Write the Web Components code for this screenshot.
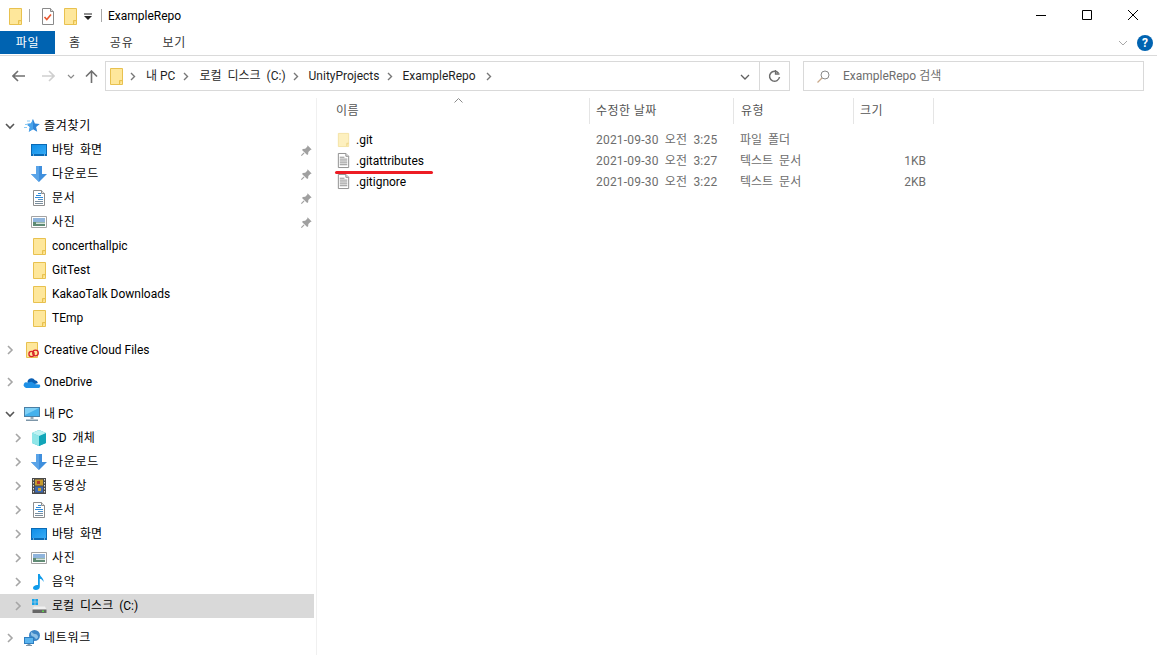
<!DOCTYPE html>
<html lang="ko">
<head>
<meta charset="UTF-8">
<title>ExampleRepo</title>
<style>
  html, body { margin: 0; background: #fff; }
  body { font: 12px/16px Roboto, "Noto Sans CJK KR", sans-serif; color: #000; overflow: hidden; }
  /* 한글은 맑은 고딕보다 좁아서 조금 벌려준다 */
  .ws { word-spacing: 3px; }
  .ls { letter-spacing: .7px; }
</style>
</head>
<body>
<explorer-window>
  <title-bar slot="top"></title-bar>
  <ribbon-tabs slot="top"></ribbon-tabs>
  <address-row slot="top"></address-row>
  <nav-pane slot="side">
    <nav-item class="ls" toggle="open" icon="star" level="0">즐겨찾기</nav-item>
    <nav-item class="ws" level="1" icon="desktop" pin>바탕 화면</nav-item>
    <nav-item class="ls" level="1" icon="down" pin>다운로드</nav-item>
    <nav-item class="ls" level="1" icon="doc" pin>문서</nav-item>
    <nav-item class="ls" level="1" icon="photo" pin>사진</nav-item>
    <nav-item level="1" icon="folder">concerthallpic</nav-item>
    <nav-item level="1" icon="folder">GitTest</nav-item>
    <nav-item level="1" icon="folder">KakaoTalk Downloads</nav-item>
    <nav-item level="1" icon="folder">TEmp</nav-item>
    <nav-item group toggle="closed" icon="ccfolder" level="0">Creative Cloud Files</nav-item>
    <nav-item group toggle="closed" icon="onedrive" level="0">OneDrive</nav-item>
    <nav-item group toggle="open" icon="pc" level="0">내 PC</nav-item>
    <nav-item class="ws" level="1" toggle="closed" icon="cube">3D 개체</nav-item>
    <nav-item class="ls" level="1" toggle="closed" icon="down">다운로드</nav-item>
    <nav-item class="ls" level="1" toggle="closed" icon="film">동영상</nav-item>
    <nav-item class="ls" level="1" toggle="closed" icon="doc">문서</nav-item>
    <nav-item class="ws" level="1" toggle="closed" icon="desktop">바탕 화면</nav-item>
    <nav-item class="ls" level="1" toggle="closed" icon="photo">사진</nav-item>
    <nav-item class="ls" level="1" toggle="closed" icon="music">음악</nav-item>
    <nav-item class="ws" level="1" toggle="closed" icon="disk" selected>로컬 디스크 (C:)</nav-item>
    <nav-item class="ls" group toggle="closed" icon="network" level="0">네트워크</nav-item>
  </nav-pane>
  <file-list slot="main">
    <file-row icon="gitfolder" date="2021-09-30 오전 3:25" type="파일 폴더">.git</file-row>
    <file-row icon="txt" date="2021-09-30 오전 3:27" type="텍스트 문서" size="1KB">.gitattributes</file-row>
    <file-row icon="txt" date="2021-09-30 오전 3:22" type="텍스트 문서" size="2KB">.gitignore</file-row>
  </file-list>
</explorer-window>

<script>
// 16x16 icons, all drawn by hand from the screenshot
const ICONS = {
  folder: `<path d="M2.500.5h12v16h-12z" fill="#fee79b" stroke="#e8c14f"/><path d="M11.500 16v-3.500h3" fill="#f9d878" stroke="#e8c14f"/>`,
  gitfolder: `<path d="M2.500 1.500h11v14h-11z" fill="#fdf0bf" stroke="#f3e2a4"/><path d="M11.500 15v-3h2" fill="#f7e4a3" stroke="#eed68a"/>`,
  check: `<path d="M1.500.5h8l3 3v13h-11z" fill="#fff" stroke="#8a8a8a"/><path d="M9.500.5v3h3" fill="#ddd" stroke="#8a8a8a"/><path d="M3.500 9l2.300 2.500L10 6.500" fill="none" stroke="#e8552d" stroke-width="1.600"/>`,
  txt: `<g transform="translate(1)"><path d="M1.500.5h8l3 3v12h-11z" fill="#fff" stroke="#8c8c8c"/><path d="M9.500.5v3h3" fill="#e4e4e4" stroke="#8c8c8c"/><path d="M3 4.500h5M3 6.500h8M3 8.500h8M3 10.500h8M3 12.500h8" stroke="#8a8a8a"/></g>`,
  desktop: `<defs><linearGradient id="d" x1="0" y1="0" x2="1" y2="1"><stop offset="0" stop-color="#0f8fe8"/><stop offset="1" stop-color="#36aaf5"/></linearGradient></defs><path d="M0 2h16v12H0z" fill="#0a6ab5"/><path d="M1 3h14v9H1z" fill="url(#d)"/><path d="M2 13h1M13 13h1" stroke="#cfe8fb"/>`,
  down: `<path d="M5 0h6v8h5l-8 8-8-8h5z" fill="#3f8fdd"/><path d="M5 0h3v16l-8-8h5z" fill="#5aa4e8"/>`,
  doc: `<path d="M2.500.5h8l3 3v12h-11z" fill="#fff" stroke="#8d8d8d"/><path d="M10.500.5v3h3" fill="#e6e6e6" stroke="#8d8d8d"/><path d="M7 3.500h3M5 5.500h5M4 7.500h8" stroke="#2f8ad8"/><path d="M7 9.500h5" stroke="#4f93cc"/><path d="M4 11.500h8M4 13.500h8" stroke="#7a8d9c"/>`,
  photo: `<path d="M.5 2.500h15v11H.5z" fill="#fff" stroke="#a3a3a3"/><path d="M2 4h12v4H2z" fill="#8fb4dc"/><path d="M2 8h12v4H2z" fill="#5f8b74"/><path d="M5 8.500h9v1.500H5z" fill="#d8e4df"/>`,
  star: `<path d="M9 1l1.900 4.500 4.900.4-3.700 3.200 1.100 4.700L9 11.300l-4.200 2.500 1.100-4.700-3.700-3.200 4.900-.4z" fill="#2f86d8"/><path d="M9 1v10.300l-4.200 2.500 1.100-4.700-3.700-3.200 4.900-.4z" fill="#4aa3ea"/><path d="M1 6.500h3M0 9.500h3M3 3h3" stroke="#8ccaf3"/>`,
  ccfolder: `<path d="M2.500 .5h11v15h-11z" fill="#fee79b" stroke="#e8c14f"/><g fill="none" stroke="#d8232a" stroke-width="1.300"><circle cx="7.500" cy="12" r="2.600"/><circle cx="11.500" cy="11" r="2.800"/></g>`,
  onedrive: `<path d="M3.500 8.500a4 4 0 0 1 7.400-2.300 3.200 3.200 0 0 1 3 2.800L8 11z" fill="#0a5fb4"/><path d="M.5 13a2.700 2.700 0 0 1 2.600-4.600l.9.1 3.600-.8 4 2.500 4 .4a2 2 0 0 1-.8 3.400H2z" fill="#1e90e6"/>`,
  pc: `<path d="M0 1h16v10H0z" fill="#4a7fa5"/><path d="M1 2h14v8H1z" fill="#45b1ec"/><path d="M1 2h14L1 9z" fill="#7fd0f6"/><path d="M6.500 11h3v2h-3z" fill="#99a9b5"/><path d="M2 13.500h12V15H2z" fill="#7d96a8"/>`,
  cube: `<path d="M8 0l7 3v10l-7 3-7-3V3z" fill="#29bcc7"/><path d="M1 3l7 3v10l-7-3z" fill="#8fe6e8"/><path d="M15 3L8 6v10l7-3z" fill="#12a5b8"/><path d="M8 0l7 3-7 3-7-3z" fill="#bdf2f2"/>`,
  film: `<path d="M1 0h14v16H1z" fill="#4a4a4a"/><path d="M4 1.500h8v6H4z" fill="#c59a2d"/><path d="M4 8.500h8v6H4z" fill="#3d68b0"/><path d="M6 3h3v3H6z" fill="#b3372e"/><path d="M7 10h3v3H7z" fill="#d2a52c"/><path d="M2.500 1v14M13.500 1v14" stroke="#ddd" stroke-dasharray="1.500 1.500"/>`,
  music: `<path d="M7 0h1.800c.3 3 4.200 3.800 3.700 8-.6-2-2.200-3-3.700-3.200V13c0 1.800-2 3-4 3-1.600 0-2.800-.8-2.800-2 0-1.600 2-3 4-3 .4 0 .7 0 1 .1z" fill="#0f9bea"/>`,
  disk: `<path d="M1 1h2.700v2.700H1zM4.300 1H7v2.700H4.300zM1 4.300h2.700V7H1zM4.300 4.300H7V7H4.300z" fill="#17a4ea"/><path d="M3 8.500h11l1.500 3h-14z" fill="#f0f0f0"/><path d="M1.500 11.500h14v3.500h-14z" fill="#666"/><path d="M11 12.500h2v1.500h-2z" fill="#5ed04c"/>`,
  network: `<circle cx="10.500" cy="5.500" r="5.500" fill="#3e86c6"/><path d="M7 2c2 .5 2 2 4 2s3 1.500 3 3-2 3-3 1-3-1-4-3z" fill="#8fc1e6"/><path d="M0 7h10v7H0z" fill="#2f7ec0"/><path d="M1 8h8v5H1z" fill="#5bb4ee"/><path d="M3.500 14h3v1h-3zM2 15h6v1H2z" fill="#7f97aa"/>`,
  pinned: `<path d="M9.500 .5l6 6-1.800.6-3 3-.3 3.400-1.400 1.200L1.500 7.200l1.200-1.400 3.400-.3 3-3z" fill="#a0a0a0"/><path d="M4.500 11.500L.5 15.500" stroke="#a0a0a0" stroke-width="1.600"/>`
};

class AppIcon extends HTMLElement {
  connectedCallback() {
    const s = this.getAttribute('size') || 16;
    this.attachShadow({ mode: 'open' }).innerHTML = `
      <style>:host{display:inline-flex;flex:none;width:${s}px;height:${s}px} svg{display:block;overflow:visible}</style>
      <svg width="${s}" height="${s}" viewBox="0 0 16 16">${ICONS[this.getAttribute('name')] || ''}</svg>`;
  }
}

// 전체 창 틀
class ExplorerWindow extends HTMLElement {
  connectedCallback() {
    this.attachShadow({ mode: 'open' }).innerHTML = `
      <style>
        :host { display: grid; width: 100%; height: 655px; grid-template: auto 1fr / 317px 1fr; overflow: hidden; }
        .top { grid-column: 1 / 3; }
        .side { border-right: 1px solid #f0f0f0; min-height: 0; }
      </style>
      <div class="top"><slot name="top"></slot></div>
      <div class="side"><slot name="side"></slot></div>
      <div><slot name="main"></slot></div>`;
  }
}

class TitleBar extends HTMLElement {
  connectedCallback() {
    this.attachShadow({ mode: 'open' }).innerHTML = `
      <style>
        :host { display: flex; height: 31px; align-items: center; padding-left: 7px; }
        .sep { width: 1px; height: 13px; background: #a8a8a8; }
        .drop { width: 8px; margin: 0 9px 0 6px; }
        .title { margin-left: 6px; }
        .ctl { margin-left: auto; display: flex; padding-right: 1px; }
        .ctl svg { display: block; width: 46px; height: 31px; }
      </style>
      <app-icon name="folder"></app-icon>
      <span class="sep" style="margin:0 11px 0 6px"></span>
      <app-icon name="check"></app-icon>
      <span style="width:5px"></span>
      <app-icon name="folder"></app-icon>
      <svg class="drop" width="8" height="8" viewBox="0 0 8 8"><path d="M0 1.500h8v1H0zM0 4h8L4 8z" fill="#222"/></svg>
      <span class="sep"></span>
      <span class="title">ExampleRepo</span>
      <span class="ctl">
        <svg viewBox="0 0 46 31"><path d="M18 15.500h10" stroke="#000"/></svg>
        <svg viewBox="0 0 46 31"><path d="M18.500 10.500h9v9h-9z" fill="none" stroke="#000"/></svg>
        <svg viewBox="0 0 46 31"><path d="M18 10l10 10M28 10L18 20" stroke="#000"/></svg>
      </span>`;
  }
}

class RibbonTabs extends HTMLElement {
  connectedCallback() {
    this.attachShadow({ mode: 'open' }).innerHTML = `
      <style>
        :host { display: flex; height: 24px; align-items: center; border-bottom: 1px solid #dadada; color: #333; letter-spacing: .8px; }
        .file { width: 55px; height: 23px; background: #0063b1; color: #fff; display: flex; align-items: center; justify-content: center; align-self: flex-start; }
        .tab { margin-left: 29px; }
        .file + .tab { margin-left: 14px; }
        .end { margin-left: auto; display: flex; align-items: center; gap: 9px; padding-right: 4px; }
        .help { width: 16px; height: 16px; border-radius: 50%; background: #0063b1; color: #fff; font-weight: 700; font-size: 12px; line-height: 16px; text-align: center; letter-spacing: 0; }
      </style>
      <div class="file">파일</div>
      <div class="tab">홈</div>
      <div class="tab">공유</div>
      <div class="tab">보기</div>
      <div class="end">
        <svg width="10" height="6" viewBox="0 0 10 6"><path d="M1 1l4 4 4-4" fill="none" stroke="#a8a8a8"/></svg>
        <span class="help">?</span>
      </div>`;
  }
}

class AddressRow extends HTMLElement {
  connectedCallback() {
    const sep = (left) => `<svg class="crumb" style="margin-left:${left}px" width="6" height="9" viewBox="0 0 6 9"><path d="M1 1l3.500 3.500L1 8" fill="none" stroke="#777" stroke-width="1.400"/></svg>`;
    this.attachShadow({ mode: 'open' }).innerHTML = `
      <style>
        :host { display: flex; height: 30px; margin: 5px 13px 7px 12px; align-items: stretch; color: #333; }
        .nav { display: flex; align-items: center; width: 93px; flex: none; }
        .box { border: 1px solid #d9d9d9; display: flex; align-items: center; box-sizing: border-box; }
        .addr { width: 685px; flex: none; padding-left: 2px; }
        .addr app-icon { margin-right: -4px; }
        .crumb { margin-right: 10px; flex: none; }
        .path { color: #1f1f1f; white-space: nowrap; }
        .end { margin-left: auto; display: flex; align-self: stretch; align-items: center; }
        .end .dd { width: 28px; text-align: center; }
        .end .rf { width: 29px; height: 100%; border-left: 1px solid #d9d9d9; display: flex; align-items: center; justify-content: center; }
        .search { flex: 1; margin-left: 13px; padding-left: 13px; color: #6d6d6d; }
        .search span { margin-left: 13px; }
      </style>
      <div class="nav">
        <svg width="13" height="12" viewBox="0 0 13 12"><path d="M1 6h12M6 1L1 6l5 5" fill="none" stroke="#707070" stroke-width="1.600"/></svg>
        <svg style="margin-left:17px" width="13" height="12" viewBox="0 0 13 12"><path d="M0 6h12M7 1l5 5-5 5" fill="none" stroke="#cfcfcf" stroke-width="1.600"/></svg>
        <svg style="margin-left:12px" width="8" height="5" viewBox="0 0 8 5"><path d="M1 1l3 3 3-3" fill="none" stroke="#8a8a8a" stroke-width="1.200"/></svg>
        <svg style="margin-left:10px" width="13" height="13" viewBox="0 0 13 13"><path d="M6.500 13V1M1 6.500L6.500 1 12 6.500" fill="none" stroke="#707070" stroke-width="1.600"/></svg>
      </div>
      <div class="box addr">
        <app-icon name="folder"></app-icon>
        ${sep(10)}<span class="path">내 PC</span>${sep(8)}<span class="path" style="word-spacing:3px">로컬 디스크 (C:)</span>${sep(7)}<span class="path">UnityProjects</span>${sep(7)}<span class="path">ExampleRepo</span>${sep(10)}
        <div class="end">
          <span class="dd"><svg width="10" height="6" viewBox="0 0 10 6"><path d="M1 1l4 4 4-4" fill="none" stroke="#606060" stroke-width="1.300"/></svg></span>
          <span class="rf"><svg width="13" height="14" viewBox="0 0 13 14"><path d="M10.500 4.200A5 5 0 1 0 11.500 8" fill="none" stroke="#6e6e6e" stroke-width="1.500"/><path d="M7.500 1v4h4" fill="none" stroke="#6e6e6e" stroke-width="1.300"/></svg></span>
        </div>
      </div>
      <div class="box search">
        <svg width="13" height="13" viewBox="0 0 13 13"><circle cx="8" cy="5" r="4" fill="none" stroke="#8a8a8a"/><path d="M5 8l-4.500 4.500" stroke="#c9a98a" stroke-width="1.200"/></svg>
        <span>ExampleRepo 검색</span>
      </div>`;
  }
}

class NavPane extends HTMLElement {
  connectedCallback() {
    this.attachShadow({ mode: 'open' }).innerHTML = `
      <style>:host { display: block; padding-top: 16px; width: 314px; }</style>
      <slot></slot>`;
  }
}

class NavItem extends HTMLElement {
  connectedCallback() {
    const level = +this.getAttribute('level') || 0;
    const toggle = this.getAttribute('toggle');
    let arrow = '';
    if (toggle === 'open') arrow = `<svg width="10" height="7" viewBox="0 0 10 7"><path d="M1 1l4 4 4-4" fill="none" stroke="#555" stroke-width="1.600"/></svg>`;
    if (toggle === 'closed') arrow = `<svg width="7" height="10" viewBox="0 0 7 10"><path d="M1 1l4 4-4 4" fill="none" stroke="#a6a6a6" stroke-width="1.600"/></svg>`;
    this.attachShadow({ mode: 'open' }).innerHTML = `
      <style>
        :host { display: flex; height: 24px; align-items: center; padding-left: ${level ? 31 : 24}px; position: relative; white-space: nowrap; }
        :host([group]) { margin-top: 8px; }
        :host([selected]) { background: #d9d9d9; }
        .arrow { width: 10px; height: 10px; display: flex; align-items: center; justify-content: center; position: absolute; left: ${level ? 13 : 5}px; top: 7px; }
        .txt { margin-left: ${level ? 5 : 4}px; }
        .pin { margin-left: auto; margin-right: 2px; }
      </style>
      <span class="arrow">${arrow}</span>
      <app-icon name="${this.getAttribute('icon')}"></app-icon>
      <span class="txt"><slot></slot></span>
      ${this.hasAttribute('pin') ? '<app-icon class="pin" size="11" name="pinned"></app-icon>' : ''}`;
  }
}

class FileList extends HTMLElement {
  connectedCallback() {
    this.attachShadow({ mode: 'open' }).innerHTML = `
      <style>
        :host { display: block; position: relative; padding-left: 19px; color: #555; }
        .head { display: grid; grid-template-columns: 254px 144px 120px 80px; height: 24px; margin-bottom: 7px; width: max-content; letter-spacing: .4px; }
        .head div { border-right: 1px solid #e5e5e5; padding-left: 6px; line-height: 26px; box-sizing: border-box; white-space: nowrap; }
        .head div:first-child { padding-left: 0; }
        .head div:nth-child(3) { padding-left: 7px; }
        .sort { position: absolute; left: 137px; top: 0; }
        .mark { position: absolute; left: 18px; top: 73px; width: 98px; height: 3px; border-radius: 2px; background: #ed1c24; }
      </style>
      <div class="head"><div>이름</div><div>수정한 날짜</div><div>유형</div><div>크기</div></div>
      <svg class="sort" width="9" height="5" viewBox="0 0 9 5"><path d="M.5 4.500l4-4 4 4" fill="none" stroke="#8a8a8a"/></svg>
      <slot></slot>
      <div class="mark"></div>`;
  }
}

class FileRow extends HTMLElement {
  connectedCallback() {
    this.attachShadow({ mode: 'open' }).innerHTML = `
      <style>
        :host { display: grid; grid-template-columns: 260px 144px 119px 67px; height: 21px; align-items: center; width: max-content; color: #6d6d6d; white-space: nowrap; }
        .name { display: flex; align-items: center; gap: 5px; color: #000; }
        .date { word-spacing: 3px; letter-spacing: .2px; }
        .type { word-spacing: 3px; }
        .size { text-align: right; }
      </style>
      <div class="name"><app-icon name="${this.getAttribute('icon')}" size="15"></app-icon><slot></slot></div>
      <div class="date">${this.getAttribute('date')}</div>
      <div class="type">${this.getAttribute('type')}</div>
      <div class="size">${this.getAttribute('size') || ''}</div>`;
  }
}

customElements.define('app-icon', AppIcon);
customElements.define('explorer-window', ExplorerWindow);
customElements.define('title-bar', TitleBar);
customElements.define('ribbon-tabs', RibbonTabs);
customElements.define('address-row', AddressRow);
customElements.define('nav-pane', NavPane);
customElements.define('nav-item', NavItem);
customElements.define('file-list', FileList);
customElements.define('file-row', FileRow);
</script>
</body>
</html>
